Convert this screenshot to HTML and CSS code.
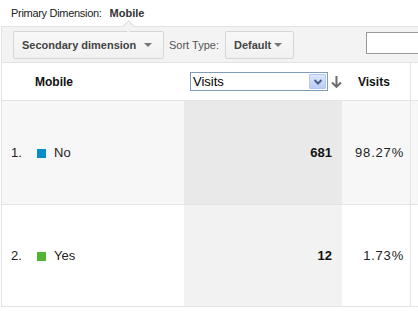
FILE: index.html
```html
<!DOCTYPE html>
<html lang="en">

<head>
    <meta charset="UTF-8">
    <title>Mobile report</title>
    <link rel="stylesheet" href="styles.css">
</head>

<body>
    <div class="report">
        <div class="primary">
            <span class="primary-label">Primary Dimension:</span>
            <span class="primary-value">Mobile</span>
        </div>

        <div class="toolbar">
            <button class="drop-btn secondary">Secondary dimension <span class="caret"></span></button>
            <span class="sort-label">Sort Type:</span>
            <button class="drop-btn sort">Default <span class="caret"></span></button>
            <input class="search" type="text">
        </div>

        <table class="data">
            <thead>
                <tr>
                    <th class="col-dim">Mobile</th>
                    <th class="col-metric">
                        <div class="metric-pick">
                            <div class="fake-select">
                                <span>Visits</span>
                                <span class="select-arrow">
                                    <svg width="10" height="8" viewBox="0 0 10 8">
                                        <path d="M1.5 2 L5 5.5 L8.5 2" fill="none" stroke="#4b5f86" stroke-width="2"/>
                                    </svg>
                                </span>
                            </div>
                            <svg class="sort-arrow" width="11" height="13" viewBox="0 0 11 13">
                                <path d="M5.5 0 V11 M1 6.5 L5.5 11 L10 6.5" fill="none" stroke="#6b6b6b" stroke-width="2"/>
                            </svg>
                        </div>
                    </th>
                    <th class="col-pct">Visits</th>
                    <th class="col-extra"></th>
                </tr>
            </thead>
            <tbody>
                <tr class="odd">
                    <td class="col-dim"><span class="num">1.</span><span class="swatch blue"></span>No</td>
                    <td class="col-metric">681</td>
                    <td class="col-pct">98.27%</td>
                    <td class="col-extra"></td>
                </tr>
                <tr class="even">
                    <td class="col-dim"><span class="num">2.</span><span class="swatch green"></span>Yes</td>
                    <td class="col-metric">12</td>
                    <td class="col-pct">1.73%</td>
                    <td class="col-extra"></td>
                </tr>
            </tbody>
        </table>
    </div>
</body>

</html>
```

FILE: styles.css
```css
body {
    margin: 0;
    font-family: "Liberation Sans", Arial, sans-serif;
    font-size: 12px;
    color: #222;
    background-color: #fff;
    overflow: hidden;
}

.report {
    width: 460px;
}

.primary {
    height: 26px;
    display: flex;
    align-items: center;
    padding-left: 11px;
    font-size: 11px;
    position: relative;
}

.primary-label {
    color: #222;
    letter-spacing: -0.3px;
    margin-right: 8px;
}

.primary-value {
    font-weight: bold;
    color: #333;
}

/* little notch pointing at the selected dimension */
.primary::after {
    content: "";
    position: absolute;
    left: 124px;
    top: 22px;
    width: 8px;
    height: 8px;
    background-color: #f3f3f3;
    border-left: 1px solid #dcdcdc;
    border-top: 1px solid #dcdcdc;
    transform: rotate(45deg);
    z-index: 2;
}

.toolbar {
    display: flex;
    align-items: center;
    height: 35px;
    padding-left: 11px;
    background-color: #f3f3f3;
    border-top: 1px solid #e3e3e3;
    border-bottom: 1px solid #e3e3e3;
    border-left: 1px solid #e3e3e3;
    margin-left: 1px;
    position: relative;
    z-index: 1;
}

.drop-btn {
    display: flex;
    align-items: center;
    height: 28px;
    padding: 0 6px 0 8px;
    font-family: inherit;
    font-size: 11px;
    font-weight: bold;
    white-space: nowrap;
    color: #444;
    background: linear-gradient(#f8f8f8, #f1f1f1);
    border: 1px solid #d6d6d6;
    border-radius: 2px;
    margin-top: 1px;
}

.secondary {
    width: 151px;
}

.sort {
    width: 69px;
}

.caret {
    display: inline-block;
    width: 0;
    height: 0;
    margin-left: auto;
    margin-right: 5px;
    border-left: 4px solid transparent;
    border-right: 4px solid transparent;
    border-top: 4px solid #777;
}

.sort-label {
    color: #555;
    font-size: 11px;
    margin: 0 6px 0 5px;
}

.search {
    margin-left: 72px;
    width: 60px;
    height: 20px;
    border: 1px solid #999;
    padding: 0;
    margin-top: -3px;
    background-color: #fff;
}

.data {
    border-collapse: collapse;
    width: 460px;
    table-layout: fixed;
    margin-left: 1px;
    border-left: 1px solid #e3e3e3;
    font-size: 13px;
}

.data th {
    height: 37px;
    padding: 0;
    text-align: left;
    font-size: 12px;
    font-weight: bold;
    color: #111;
    border-bottom: 1px solid #e3e3e3;
}

.data td {
    padding: 0;
    border-bottom: 1px solid #e3e3e3;
    color: #222;
}

.data th.col-dim {
    padding-left: 33px;
    width: 149px;
}

.col-dim {
    width: 182px;
}

.col-metric {
    width: 158px;
}

.col-pct {
    width: 68px;
    border-right: 1px solid #e3e3e3;
}

.data th.col-pct {
    padding-left: 16px;
    width: 52px;
}

.metric-pick {
    display: flex;
    align-items: center;
    padding-left: 6px;
}

.fake-select {
    display: flex;
    align-items: center;
    justify-content: space-between;
    width: 135px;
    height: 17px;
    border: 1px solid #7f9db9;
    padding-left: 2px;
    font-weight: normal;
    font-size: 13px;
    color: #000;
}

.select-arrow {
    display: flex;
    align-items: center;
    justify-content: center;
    width: 17px;
    height: 15px;
    margin-right: 1px;
    border-radius: 1px;
    background: linear-gradient(#dbe6fd, #b9ccf6);
    border: 1px solid #b4c8f0;
    box-sizing: border-box;
}

.sort-arrow {
    margin-left: 3px;
    margin-top: 2px;
}

.odd td {
    height: 103px;
    background-color: #f7f7f7;
}

.odd td.col-metric {
    background-color: #e9e9e9;
}

.even td {
    height: 101px;
    background-color: #fff;
}

.even td.col-metric {
    background-color: #f2f2f2;
}

td.col-dim {
    padding-left: 9px;
    width: 173px;
}

td.col-metric {
    text-align: right;
    font-weight: bold;
    color: #111;
    padding-right: 10px;
    width: 148px;
}

td.col-pct {
    text-align: right;
    letter-spacing: 0.8px;
    padding-right: 6px;
    width: 62px;
}

.num {
    display: inline-block;
    width: 26px;
}

.swatch {
    display: inline-block;
    width: 9px;
    height: 9px;
    margin-right: 8px;
    vertical-align: -1px;
}

.swatch.blue {
    background-color: #058dc7;
}

.swatch.green {
    background-color: #50b432;
}
```
